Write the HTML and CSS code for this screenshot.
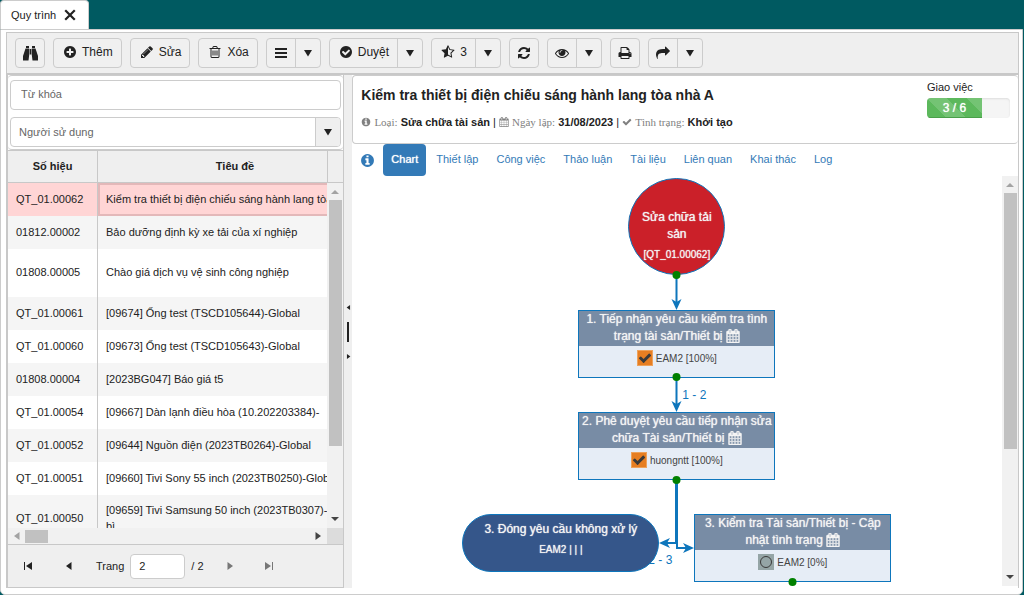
FILE: index.html
```html
<!DOCTYPE html>
<html lang="vi">
<head>
<meta charset="utf-8">
<title>Quy trình</title>
<link rel="stylesheet" href="styles.css">
</head>
<body>
<svg class="sprite" aria-hidden="true">
  <symbol id="plus-circle" viewBox="0 0 1792 1792"><path d="M1344 960v-128q0-26-19-45t-45-19h-256v-256q0-26-19-45t-45-19h-128q-26 0-45 19t-19 45v256h-256q-26 0-45 19t-19 45v128q0 26 19 45t45 19h256v256q0 26 19 45t45 19h128q26 0 45-19t19-45v-256h256q26 0 45-19t19-45zm320-64q0 209-103 385.500t-279.500 279.500-385.500 103-385.500-103-279.500-279.500-103-385.500 103-385.500 279.500-279.500 385.500-103 385.500 103 279.500 279.500 103 385.500z"/></symbol>
  <symbol id="check-circle" viewBox="0 0 1792 1792"><path d="M1412 734q0-28-18-46l-91-90q-19-19-45-19t-45 19l-408 407-226-226q-19-19-45-19t-45 19l-91 90q-18 18-18 46 0 27 18 45l362 362q19 19 45 19 27 0 46-19l543-543q18-18 18-45zm252 162q0 209-103 385.500t-279.500 279.500-385.500 103-385.500-103-279.500-279.500-103-385.500 103-385.500 279.500-279.500 385.500-103 385.500 103 279.500 279.500 103 385.500z"/></symbol>
  <symbol id="info-circle" viewBox="0 0 1792 1792"><path d="M1152 1376v-160q0-14-9-23t-23-9h-96v-512q0-14-9-23t-23-9h-320q-14 0-23 9t-9 23v160q0 14 9 23t23 9h96v320h-96q-14 0-23 9t-9 23v160q0 14 9 23t23 9h448q14 0 23-9t9-23zm-128-896v-160q0-14-9-23t-23-9h-192q-14 0-23 9t-9 23v160q0 14 9 23t23 9h192q14 0 23-9t9-23zm640 416q0 209-103 385.500t-279.500 279.500-385.500 103-385.500-103-279.500-279.500-103-385.500 103-385.500 279.500-279.500 385.500-103 385.500 103 279.500 279.500 103 385.500z"/></symbol>
  <symbol id="pencil" viewBox="0 0 1792 1792"><path d="M491 1536l91-91-235-235-91 91v107h128v128h107zm523-928q0-22-22-22-10 0-17 7l-542 542q-7 7-7 17 0 22 22 22 10 0 17-7l542-542q7-7 7-17zm-54-192l416 416-832 832h-416v-416zm683 96q0 53-37 90l-166 166-416-416 166-165q36-38 90-38 53 0 91 38l235 234q37 39 37 91z"/></symbol>
  <symbol id="trash" viewBox="0 0 1792 1792"><path d="M704 736v576q0 14-9 23t-23 9h-64q-14 0-23-9t-9-23v-576q0-14 9-23t23-9h64q14 0 23 9t9 23zm256 0v576q0 14-9 23t-23 9h-64q-14 0-23-9t-9-23v-576q0-14 9-23t23-9h64q14 0 23 9t9 23zm256 0v576q0 14-9 23t-23 9h-64q-14 0-23-9t-9-23v-576q0-14 9-23t23-9h64q14 0 23 9t9 23zm128 724v-948h-896v948q0 22 7 40.500t14.500 27 10.500 8.500h832q3 0 10.500-8.500t14.500-27 7-40.500zm-672-1076h448l-48-117q-7-9-17-11h-317q-10 2-17 11zm928 32v64q0 14-9 23t-23 9h-96v948q0 83-47 143.500t-113 60.500h-832q-66 0-113-58.500t-47-141.500v-952h-96q-14 0-23-9t-9-23v-64q0-14 9-23t23-9h309l70-167q15-37 54-63t79-26h320q40 0 79 26t54 63l70 167h309q14 0 23 9t9 23z"/></symbol>
  <symbol id="check" viewBox="0 0 1792 1792"><path d="M1671 566q0 40-28 68l-724 724-136 136q-28 28-68 28t-68-28l-136-136-362-362q-28-28-28-68t28-68l136-136q28-28 68-28t68 28l294 295 656-657q28-28 68-28t68 28l136 136q28 28 28 68z"/></symbol>
  <symbol id="bars" viewBox="0 0 14 14"><path d="M1 2h12v2H1zM1 6h12v2H1zM1 10h12v2H1z"/></symbol>
  <symbol id="refresh" viewBox="0 0 1792 1792"><path d="M1639 1056q0 5-1 7-64 268-268 434.500t-478 166.500q-146 0-282.500-55t-243.500-157l-129 129q-19 19-45 19t-45-19-19-45v-448q0-26 19-45t45-19h448q26 0 45 19t19 45-19 45l-137 137q71 66 161 102t187 36q134 0 250-65t186-179q11-17 53-117 8-23 30-23h192q13 0 22.500 9.500t9.500 22.500zm25-800v448q0 26-19 45t-45 19h-448q-26 0-45-19t-19-45 19-45l138-138q-148-137-349-137-134 0-250 65t-186 179q-11 17-53 117-8 23-30 23h-199q-13 0-22.500-9.500t-9.500-22.500v-7q65-268 270-434.500t480-166.500q146 0 284 55.500t245 156.500l130-129q19-19 45-19t45 19 19 45z"/></symbol>
  <symbol id="eye" viewBox="0 0 1792 1792"><path d="M1664 960q-152-236-381-353 61 104 61 225 0 185-131.500 316.500t-316.500 131.500-316.500-131.500-131.500-316.500q0-121 61-225-229 117-381 353 133 205 333.500 326.500t434.500 121.500 434.500-121.500 333.500-326.500zm-720-384q0-20-14-34t-34-14q-125 0-214.500 89.500t-89.500 214.500q0 20 14 34t34 14 34-14 14-34q0-86 61-147t147-61q20 0 34-14t14-34zm848 384q0 34-20 69-140 230-376.500 368.500t-499.500 138.500-499.500-139-376.500-368q-20-35-20-69t20-69q140-229 376.500-368t499.500-139 499.500 139 376.500 368q20 35 20 69z"/></symbol>
  <symbol id="print" viewBox="0 0 1792 1792"><path d="M448 1536h896v-256h-896v256zm0-640h896v-384h-160q-40 0-68-28t-28-68v-160h-640v640zm1152 64q0-26-19-45t-45-19-45 19-19 45 19 45 45 19 45-19 19-45zm128 0v416q0 13-9.500 22.500t-22.500 9.500h-224v160q0 40-28 68t-68 28h-960q-40 0-68-28t-28-68v-160h-224q-13 0-22.500-9.500t-9.500-22.500v-416q0-79 56.500-135.500t135.500-56.500h64v-544q0-40 28-68t68-28h672q40 0 88 20t76 48l152 152q28 28 48 76t20 88v256h64q79 0 135.500 56.500t56.500 135.500z"/></symbol>
  <symbol id="share" viewBox="0 0 1792 1792"><path d="M1792 640q0 26-19 45l-512 512q-19 19-45 19t-45-19-19-45v-256h-224q-98 0-175.500 6t-154 21.500-133 42.500-105.500 69.500-80 101-48.500 138.500-17.500 181q0 55 5 123 0 6 2.500 23.500t2.500 26.500q0 15-8.500 25t-23.500 10q-16 0-28-17-7-9-13-22t-13.500-30-10.500-24q-127-285-127-451 0-199 53-333 162-403 875-403h224v-256q0-26 19-45t45-19 45 19l512 512q19 19 19 45z"/></symbol>
  <symbol id="calendar" viewBox="0 0 1792 1792"><path d="M192 1664h288v-288h-288v288zm352 0h320v-288h-320v288zm-352-352h288v-320h-288v320zm352 0h320v-320h-320v320zm-352-384h288v-288h-288v288zm736 736h320v-288h-320v288zm-384-736h320v-288h-320v288zm768 736h288v-288h-288v288zm-384-352h320v-320h-320v320zm-352-864v-288q0-13-9.500-22.500t-22.500-9.500h-64q-13 0-22.500 9.500t-9.500 22.500v288q0 13 9.500 22.500t22.500 9.500h64q13 0 22.500-9.500t9.500-22.500zm736 864h288v-320h-288v320zm-384-384h320v-288h-320v288zm384 0h288v-288h-288v288zm32-480v-288q0-13-9.500-22.500t-22.500-9.500h-64q-13 0-22.500 9.500t-9.500 22.500v288q0 13 9.500 22.500t22.500 9.500h64q13 0 22.500-9.500t9.500-22.500zm384-64v1280q0 52-38 90t-90 38h-1408q-52 0-90-38t-38-90v-1280q0-52 38-90t90-38h128v-96q0-66 47-113t113-47h64q66 0 113 47t47 113v96h384v-96q0-66 47-113t113-47h64q66 0 113 47t47 113v96h128q52 0 90 38t38 90z"/></symbol>
  <symbol id="star-half" viewBox="0 0 1792 1792"><path d="M1250 957l257-250-356-52-66-10-30-60-159-322v963l59 31 318 168-60-355-12-66zm452-262l-363 354 86 500q5 33-6 51.500t-34 18.500q-17 0-40-12l-449-236-449 236q-23 12-40 12-23 0-34-18.500t-6-51.500l86-500-364-354q-32-32-23-59.500t54-34.500l502-73 225-455q20-41 49-41 28 0 49 41l225 455 502 73q45 7 54 34.500t-24 59.500z"/></symbol>
  <symbol id="binoculars" viewBox="0 0 15 15"><path d="M3 0h3v2H3zM9 0h3v2H9zM2.500 2.500h3.700V9L5.500 14.500H0V10zM8.800 2.500h3.700L15 10v4.500H9.500L8.800 9zM6.700 3h1.600v5.500H6.700z"/></symbol>
  <symbol id="close" viewBox="0 0 12 12"><path d="M2 2l8 8M10 2l-8 8" fill="none" stroke="currentColor" stroke-width="2.200" stroke-linecap="square"/></symbol>
  <symbol id="down" viewBox="0 0 10 8"><path d="M1 1h8L5 7.500z"/></symbol>
  <symbol id="tri-up" viewBox="0 0 8 8"><path d="M0 6l4-4 4 4z"/></symbol>
  <symbol id="tri-down" viewBox="0 0 8 8"><path d="M0 2l4 4 4-4z"/></symbol>
  <symbol id="tri-left" viewBox="0 0 8 8"><path d="M6.500 0v8L1 4z"/></symbol>
  <symbol id="tri-right" viewBox="0 0 8 8"><path d="M1.500 0v8L7 4z"/></symbol>
  <symbol id="first" viewBox="0 0 8 8"><path d="M0 0h1v8H0zM8 0v8L2 4z"/></symbol>
  <symbol id="last" viewBox="0 0 8 8"><path d="M7 0h1v8H7zM0 0v8l6-4z"/></symbol>
</svg>

<header class="tabstrip">
  <div class="tab"><span>Quy trình</span><button class="plain" aria-label="Đóng"><svg class="i12"><use href="#close"/></svg></button></div>
</header>

<main class="panel">
  <div class="toolbar">
    <button class="btn" aria-label="Tìm"><svg class="i15"><use href="#binoculars"/></svg></button>
    <button class="btn padded"><svg class="i14"><use href="#plus-circle"/></svg>Thêm</button>
    <button class="btn padded"><svg class="i14"><use href="#pencil"/></svg>Sửa</button>
    <button class="btn padded"><svg class="i14"><use href="#trash"/></svg>Xóa</button>
    <div class="split"><button aria-label="Danh sách"><svg class="i14"><use href="#bars"/></svg></button><button class="arrow" aria-label="Mở"><svg class="caret"><use href="#down"/></svg></button></div>
    <div class="split"><button class="padded"><svg class="i14"><use href="#check-circle"/></svg>Duyệt</button><button class="arrow" aria-label="Mở"><svg class="caret"><use href="#down"/></svg></button></div>
    <div class="split"><button class="padded"><svg class="i14"><use href="#star-half"/></svg>3</button><button class="arrow" aria-label="Mở"><svg class="caret"><use href="#down"/></svg></button></div>
    <button class="btn" aria-label="Làm mới"><svg class="i14"><use href="#refresh"/></svg></button>
    <div class="split"><button aria-label="Xem"><svg class="i14"><use href="#eye"/></svg></button><button class="arrow" aria-label="Mở"><svg class="caret"><use href="#down"/></svg></button></div>
    <button class="btn" aria-label="In"><svg class="i14"><use href="#print"/></svg></button>
    <div class="split"><button aria-label="Chia sẻ"><svg class="i14"><use href="#share"/></svg></button><button class="arrow" aria-label="Mở"><svg class="caret"><use href="#down"/></svg></button></div>
  </div>

  <div class="work">
    <section class="list">
      <div class="filters">
        <input class="field" type="text" placeholder="Từ khóa" aria-label="Từ khóa">
        <div class="combo">
          <select aria-label="Người sử dụng"><option>Người sử dụng</option></select>
          <span class="combo-arrow"><svg class="caret"><use href="#down"/></svg></span>
        </div>
      </div>
      <div class="grid">
        <div class="rows">
          <table>
            <colgroup><col class="c-code"><col class="c-title"></colgroup>
            <thead><tr><th>Số hiệu</th><th>Tiêu đề</th></tr></thead>
            <tbody>
              <tr class="selected"><td>QT_01.00062</td><td>Kiểm tra thiết bị điện chiếu sáng hành lang tòa nhà A</td></tr>
              <tr><td>01812.00002</td><td>Bảo dưỡng định kỳ xe tải của xí nghiệp</td></tr>
              <tr class="tall"><td>01808.00005</td><td>Chào giá dịch vụ vệ sinh công nghiệp</td></tr>
              <tr><td>QT_01.00061</td><td>[09674] Ống test (TSCD105644)-Global</td></tr>
              <tr><td>QT_01.00060</td><td>[09673] Ống test (TSCD105643)-Global</td></tr>
              <tr><td>01808.00004</td><td>[2023BG047] Báo giá t5</td></tr>
              <tr><td>QT_01.00054</td><td>[09667] Dàn lạnh điều hòa (10.202203384)-</td></tr>
              <tr><td>QT_01.00052</td><td>[09644] Nguồn điện (2023TB0264)-Global</td></tr>
              <tr><td>QT_01.00051</td><td>[09660] Tivi Sony 55 inch (2023TB0250)-Global</td></tr>
              <tr class="tall"><td>QT_01.00050</td><td>[09659] Tivi Samsung 50 inch (2023TB0307)-<br>bì</td></tr>
            </tbody>
          </table>
        </div>
        <div class="side">
          <div class="side-head"></div>
          <div class="vbar"><svg class="i8 dim"><use href="#tri-up"/></svg><div class="vtrack"><div class="vthumb list-thumb"></div></div><svg class="i8"><use href="#tri-down"/></svg></div>
        </div>
        <div class="hbar"><svg class="i8 dim"><use href="#tri-left"/></svg><div class="htrack"><div class="hthumb"></div></div><svg class="i8"><use href="#tri-right"/></svg></div>
        <div class="corner"></div>
      </div>
      <nav class="pager">
        <button class="plain" aria-label="Trang đầu"><svg class="i8"><use href="#first"/></svg></button>
        <button class="plain" aria-label="Trang trước"><svg class="i8"><use href="#tri-left"/></svg></button>
        <label for="page">Trang</label>
        <input id="page" type="text" value="2">
        <span class="total">/ 2</span>
        <button class="plain off" aria-label="Trang sau"><svg class="i8"><use href="#tri-right"/></svg></button>
        <button class="plain off" aria-label="Trang cuối"><svg class="i8"><use href="#last"/></svg></button>
      </nav>
    </section>

    <div class="splitter"><svg class="mini"><use href="#tri-left"/></svg><span class="grip"></span><svg class="mini"><use href="#tri-right"/></svg></div>

    <section class="detail">
      <div class="summary">
        <div>
          <h1>Kiểm tra thiết bị điện chiếu sáng hành lang tòa nhà A</h1>
          <p class="meta"><svg><use href="#info-circle"/></svg> <span>Loại:</span> <b>Sửa chữa tài sản</b> | <svg><use href="#calendar"/></svg> <span>Ngày lập:</span> <b>31/08/2023</b> | <svg><use href="#check"/></svg> <span>Tình trạng:</span> <b>Khởi tạo</b></p>
        </div>
        <div class="assign"><span>Giao việc</span><div class="progress"><div class="fill">3 / 6</div></div></div>
      </div>
      <nav class="tabs">
        <svg class="info"><use href="#info-circle"/></svg>
        <a class="active" href="#chart">Chart</a><a href="#a">Thiết lập</a><a href="#b">Công việc</a><a href="#c">Thảo luận</a><a href="#d">Tài liệu</a><a href="#e">Liên quan</a><a href="#f">Khai thác</a><a href="#g">Log</a>
      </nav>
      <div class="chart" id="chart">
        <div class="canvas">
          <svg class="links" width="640" height="410">
            <path d="M324.500 99v29M324.500 201v29"/>
            <path d="M324 303v64H312M325 303v69H336"/>
            <path class="head" d="M324.500 134l-5-11 5 3 5-3zM324.500 236l-5-11 5 3 5-3zM307 367l11-5-3 5 3 5zM342 372l-11-5 3 5-3 5z"/>
          </svg>
          <span class="link-label l12">1 - 2</span>
          <span class="link-label l23">2 - 3</span>
          <div class="node start"><div>Sửa chữa tải sản</div><small>[QT_01.00062]</small></div>
          <div class="node task n1"><div class="task-head">1. Tiếp nhận yêu cầu kiểm tra tình trạng tài sản/Thiết bị <svg><use href="#calendar"/></svg></div><div class="task-body"><span class="state"><svg><use href="#check"/></svg></span>EAM2 [100%]</div></div>
          <div class="node task n2"><div class="task-head">2. Phê duyệt yêu cầu tiếp nhận sửa chữa Tài sản/Thiết bị <svg><use href="#calendar"/></svg></div><div class="task-body"><span class="state"><svg><use href="#check"/></svg></span>huongntt [100%]</div></div>
          <div class="node end"><div>3. Đóng yêu cầu không xử lý</div><small>EAM2 | | |</small></div>
          <div class="node task n3"><div class="task-head">3. Kiểm tra Tài sản/Thiết bị - Cập nhật tình trạng <svg><use href="#calendar"/></svg></div><div class="task-body"><span class="state idle"><i></i></span>EAM2 [0%]</div></div>
          <svg class="links" width="640" height="410"><g class="dots"><circle cx="324.500" cy="99" r="4"/><circle cx="324.500" cy="201" r="4"/><circle cx="324.500" cy="304" r="4"/><circle cx="440.500" cy="406" r="4"/></g></svg>
        </div>
        <div class="vbar"><svg class="i8 dim"><use href="#tri-up"/></svg><div class="vtrack"><div class="vthumb chart-thumb"></div></div><svg class="i8"><use href="#tri-down"/></svg></div>
      </div>
    </section>
  </div>
</main>
</body>
</html>
```

FILE: styles.css
```css
* { box-sizing: border-box; }
html, body { height: 100%; }
body {
  margin: 0;
  display: flex;
  flex-direction: column;
  background: #005a61;
  color: #222;
  font: 11px/16px "Liberation Sans", Arial, sans-serif;
  overflow: hidden;
}
svg { display: block; fill: currentColor; flex: none; }
.sprite { position: absolute; width: 0; height: 0; }
button, input, select { font: inherit; color: inherit; }
.i8 { width: 8px; height: 8px; }
.i12 { width: 12px; height: 12px; }
.i14 { width: 14px; height: 14px; }
.i15 { width: 15px; height: 15px; }
.caret { width: 10px; height: 8px; }
.plain { display: flex; padding: 0; border: 0; background: none; }

.tabstrip { display: flex; flex: none; }
.tab {
  display: flex;
  align-items: center;
  gap: 8px;
  height: 29px;
  padding: 0 12px 1px 10px;
  border: 1px solid #ccc;
  border-bottom: 0;
  border-radius: 4px 4px 0 0;
  background: #fff;
}

.panel {
  flex: 1;
  min-height: 0;
  display: flex;
  flex-direction: column;
  margin-right: 1px;
  padding: 2px 3px 6px 5px;
  border: 1px solid #ccc;
  border-radius: 0 0 5px 5px;
  background: #fff;
}
.toolbar {
  display: flex;
  flex: none;
  align-items: center;
  gap: 8px;
  height: 43px;
  padding: 0 8px;
  border: 1px solid #c8c8c8;
  border-bottom-width: 2px;
  background: #efefef;
  font-size: 12px;
}
.btn, .split {
  display: flex;
  align-items: center;
  justify-content: center;
  min-width: 30px;
  height: 30px;
  border: 1px solid #ccc;
  border-radius: 4px;
  background: #f0f0f0;
}
.btn { padding: 0; }
.btn.padded, .split .padded { gap: 5px; padding: 0 8px 2px 9px; }
.split { align-items: stretch; }
.split button {
  display: flex;
  align-items: center;
  justify-content: center;
  min-width: 28px;
  padding: 0;
  border: 0;
  background: none;
}
.split .arrow { min-width: 25px; border-left: 1px solid #ccc; }

.work {
  flex: 1;
  min-height: 0;
  display: grid;
  grid-template-columns: 338fr 8px 666fr;
}
.list {
  display: flex;
  flex-direction: column;
  min-width: 0;
  min-height: 0;
  border: 1px solid #c8c8c8;
  border-width: 0 1px 1px 2px;
}
.filters {
  display: flex;
  flex-direction: column;
  flex: none;
  gap: 7px;
  padding: 4px 2px 2px;
  border: 1px solid #ccc;
  border-width: 1px 0;
  border-radius: 4px;
}
.field, .combo {
  width: 100%;
  height: 30px;
  border: 1px solid #ccc;
  border-radius: 4px;
  background: #fff;
  color: #666;
}
.field { padding: 0 10px 2px; }
.field::placeholder { color: #666; }
.combo { display: flex; overflow: hidden; }
.combo select {
  flex: 1;
  min-width: 0;
  padding: 0 8px 1px;
  border: 0;
  background: none;
  appearance: none;
}
.combo-arrow {
  display: flex;
  align-items: center;
  justify-content: center;
  width: 25px;
  border-left: 1px solid #ccc;
  background: #efefef;
  color: #222;
}
.grid {
  flex: 1;
  min-height: 0;
  display: grid;
  grid-template: 1fr 16px / 1fr 16px;
  border-top: 1px solid #c8c8c8;
}
.rows { overflow: hidden; }
table { width: 364px; table-layout: fixed; border-collapse: separate; border-spacing: 0; }
.c-code { width: 90px; }
.c-title { width: 274px; }
th { height: 32px; padding: 0 0 2px; background: #efefef; border-bottom: 1px solid #c8c8c8; }
td { height: 33px; padding: 0 8px 2px; white-space: nowrap; }
th:first-child, td:first-child { border-right: 1px solid #c8c8c8; }
tbody tr:nth-child(even) { background: #f5f5f5; }
.tall td { height: 48px; }
.selected { background: #ffd5d5; }
.selected td + td { box-shadow: inset 0 0 0 2px #e3b8b9; }
.side { display: flex; flex-direction: column; min-height: 0; }
.side-head { flex: none; height: 32px; border: 1px solid #c8c8c8; border-width: 0 0 1px 1px; background: #efefef; }
.vbar {
  flex: 1;
  min-height: 0;
  display: flex;
  flex-direction: column;
  align-items: center;
  gap: 4px;
  padding: 5px 0;
  background: #f1f1f1;
  color: #444;
}
.dim { color: #a3a3a3; }
.vtrack { flex: 1; min-height: 0; width: 13px; }
.vthumb { background: #c1c1c1; }
.list-thumb { height: 79%; }
.chart-thumb { height: 68%; }
.hbar { display: flex; align-items: center; gap: 4px; padding: 0 5px; background: #f1f1f1; color: #444; }
.htrack { flex: 1; }
.hthumb { width: 23px; height: 13px; background: #c1c1c1; }
.corner { background: #dcdcdc; }
.pager {
  display: flex;
  flex: none;
  align-items: center;
  height: 43px;
  padding-left: 16px;
  border-top: 1px solid #c8c8c8;
  background: #efefef;
}
.pager label { margin: 0 6px 0 23px; }
.pager button + button { margin-left: 33px; }
.pager .off + .off { margin-left: 31px; }
.pager .total + .off { margin-left: 22px; }
.pager input { width: 55px; height: 25px; padding: 0 8px; border: 1px solid #ccc; border-radius: 4px; background: #fff; }
.pager .total { margin-left: 6px; }
.off { color: #777; }

.splitter {
  display: flex;
  flex-direction: column;
  align-items: center;
  justify-content: center;
  gap: 12px;
  background: #efefef;
}
.mini { width: 5px; height: 5px; }
.grip { width: 2px; height: 20px; background: #222; }

.detail { display: flex; flex-direction: column; min-width: 0; min-height: 0; border-right: 1px solid #c8c8c8; }
.summary {
  display: flex;
  flex: none;
  justify-content: space-between;
  height: 69px;
  padding: 3px 8px 0;
  border: 1px solid #ccc;
  border-right: 0;
  border-radius: 4px;
}
h1 { margin: 7px 0 10px; font-size: 14px; line-height: 18px; }
.meta { margin: 0; white-space: nowrap; }
.meta svg { display: inline-block; width: 10px; height: 10px; vertical-align: -1px; color: #808080; }
.meta span { color: #808080; font-family: "Liberation Serif", "Times New Roman", serif; }
.assign { flex: none; }
.assign span { display: block; margin-bottom: 3px; }
.progress { width: 83px; height: 20px; border-radius: 4px; background: #f5f5f5; box-shadow: inset 0 1px 2px #ddd; overflow: hidden; }
.fill {
  width: 66%;
  height: 20px;
  background: #5cb85c linear-gradient(45deg, rgba(255,255,255,.15) 25%, transparent 25%, transparent 50%, rgba(255,255,255,.15) 50%, rgba(255,255,255,.15) 75%, transparent 75%) 0 0 / 40px 40px;
  box-shadow: inset 0 -1px 0 #4a9f4a;
  color: #fff;
  font-size: 12px;
  line-height: 20px;
  text-align: center;
  text-shadow: 0 0 1px #fff;
}
.tabs { display: flex; flex: none; align-items: center; gap: 2px; height: 32px; padding-left: 8px; color: #337ab7; }
.tabs .info { width: 15px; height: 15px; margin-right: 6px; }
.tabs a { padding: 0 8px 2px; border-radius: 4px; color: #337ab7; line-height: 30px; text-decoration: none; white-space: nowrap; }
.tabs .active { background: #337ab7; color: #fff; text-shadow: 0 0 1px #fff; }

.chart { flex: 1; min-height: 0; display: flex; margin-bottom: 2px; overflow: hidden; }
.chart .vbar { flex: 0 0 16px; }
.canvas { position: relative; flex: 1; min-width: 0; overflow: hidden; }
.links { position: absolute; left: 0; top: 0; fill: none; }
.links path { fill: none; stroke: #0e76bc; stroke-width: 2; }
.links .head { fill: #0e76bc; stroke: none; }
.dots { fill: #008000; }
.node { position: absolute; color: #f4f4f4; font-size: 12px; line-height: 17px; text-align: center; text-shadow: 0 0 1px #f4f4f4; }
.node small { display: block; margin-top: 3px; font-size: 10px; }
.start { left: 276px; top: 2px; width: 97px; height: 97px; padding: 30px 8px 0; border: 1px solid #0e76bc; border-radius: 50%; background: #cb2029; }
.start small { white-space: nowrap; }
.task { width: 197px; height: 68px; border: 1px solid #0e76bc; background: #e6edf6; }
.task-head { height: 35px; background: #788ca5; }
.task-head svg { display: inline-block; width: 14px; height: 14px; vertical-align: -3px; stroke: currentColor; stroke-width: 60px; }
.task-body { display: flex; align-items: center; justify-content: center; gap: 3px; height: 24px; color: #444; font-size: 10px; text-shadow: none; }
.state { display: flex; align-items: center; justify-content: center; width: 16px; height: 16px; border: 1px solid #eda25c; background: #e67e22; color: #3a3a3a; }
.state svg { width: 14px; height: 14px; }
.idle { border-color: #95a5a6; background: #95a5a6; }
.idle i { width: 12px; height: 12px; border: 1px solid #3a3a3a; border-radius: 50%; }
.n1 { left: 226px; top: 134px; }
.n2 { left: 226px; top: 236px; }
.n3 { left: 342px; top: 338px; }
.end { left: 110px; top: 338px; width: 197px; height: 58px; padding-top: 6px; border: 1px solid #0e76bc; border-radius: 29px; background: #35568a; }
.link-label { position: absolute; color: #0e76bc; font-size: 12px; }
.l12 { left: 330px; top: 211px; }
.l23 { left: 296px; top: 376px; }
```
